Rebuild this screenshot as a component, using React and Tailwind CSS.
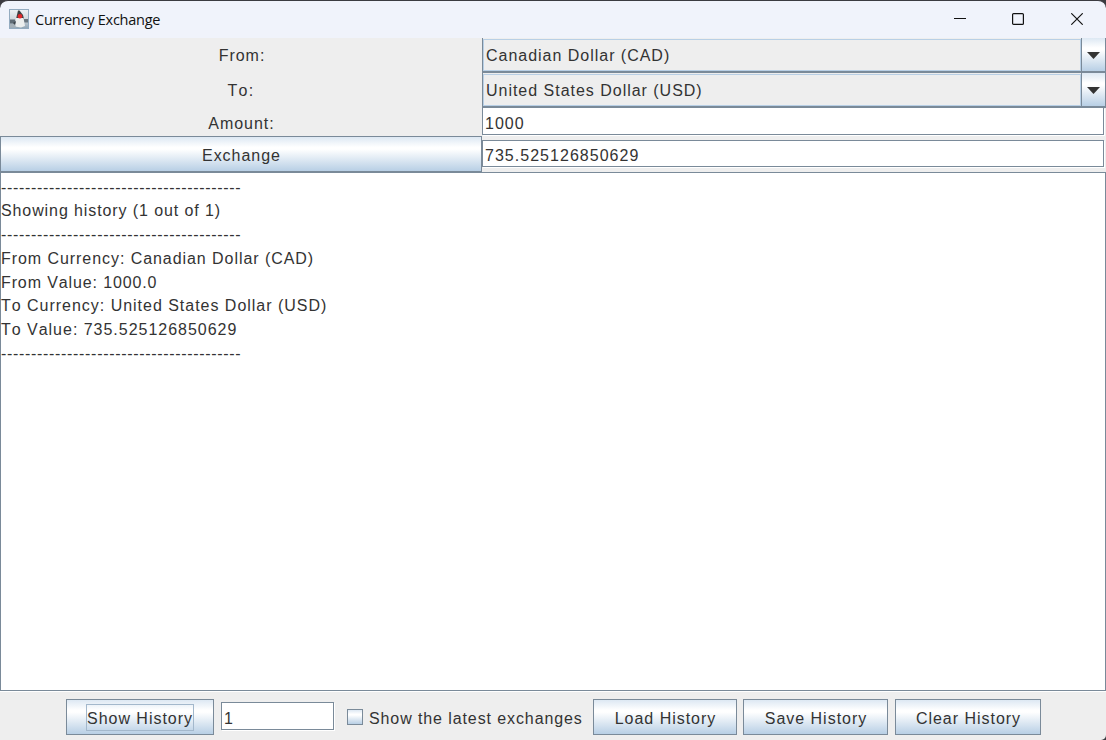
import React from "react";

const metal =
  "border border-[#7a8a99] bg-[linear-gradient(#dde8f3_0%,#ffffff_30%,#ffffff_36%,#b8cfe5_100%)]";

function DukeIcon() {
  return (
    <svg width="20" height="20" viewBox="0 0 20 20" className="-mt-px ml-[9px] shrink-0">
      <defs>
        <linearGradient id="sky" x1="0" y1="0" x2="0" y2="1">
          <stop offset="0" stopColor="#eef2f5" />
          <stop offset="0.55" stopColor="#cdd5db" />
          <stop offset="1" stopColor="#8fa3b4" />
        </linearGradient>
      </defs>
      <rect x="0.5" y="0.5" width="19" height="19" fill="url(#sky)" stroke="#93abc0" />
      <path d="M1 10.5h5l1 4H1z" fill="#5f6b75" />
      <path d="M14 10h5v3.500h-4z" fill="#6a7680" />
      <path d="M9 1.500h1.500L14 6l1 4H7z" fill="#3f4143" />
      <path d="M7 9h7.500l1.500 8-4 1.500-6-1z" fill="#eceeee" />
      <path d="M1 15l5 0 1 3.500H1z" fill="#a5b0b8" />
      <path d="M4 14l3-2-1 4z" fill="#3c444b" />
      <circle cx="11" cy="7.2" r="2.3" fill="#e2262a" />
    </svg>
  );
}

function TitleBar() {
  return (
    <header className="flex h-[38px] shrink-0 items-center rounded-t-[8px] border-t border-[#3b3b40] bg-[#f0f3fb]">
      <DukeIcon />
      <h1 className="ml-[6px] w-[200px] font-['Open_Sans',sans-serif] text-[14.5px] leading-5 tracking-[-0.24px] text-[#111]">
        Currency Exchange
      </h1>
      <div className="-mt-[2px] ml-auto flex items-center">
        <svg width="12" height="12" className="mr-[46px]">
          <path d="M0 5.5h12" stroke="#111" />
        </svg>
        <svg width="12" height="12" className="mr-[47px]">
          <rect x="0.6" y="0.6" width="10.8" height="10.8" rx="1" fill="none" stroke="#111" strokeWidth="1.2" />
        </svg>
        <svg width="12" height="12" className="mr-[23px]">
          <path d="M0.3 0.3l11.4 11.4M11.7 0.3L0.3 11.7" stroke="#111" strokeWidth="1.15" />
        </svg>
      </div>
    </header>
  );
}

function Combo({ children }) {
  return (
    <div className="flex h-[35px] border-l border-b border-[#7a8a99]">
      <div className="flex h-[34px] grow flex-col border-b border-[#7a8a99]">
        <div className="mt-px flex grow items-center border border-[#b8cfe5] pt-[2px] pl-[2px]">
          <span>{children}</span>
        </div>
      </div>
      <div className={`flex w-[25px] items-center justify-center border-t-0 ${metal}`}>
        <svg width="13" height="7" className="mt-[2px]">
          <path d="M0 0h13L6.5 7z" fill="#333" />
        </svg>
      </div>
    </div>
  );
}

function Field({ children, className }) {
  return (
    <div className={`flex items-center border border-[#7a8a99] bg-white pl-[2px] shadow-[1px_1px_0_#fff] ${className}`}>
      {children}
    </div>
  );
}

function Button({ children, className }) {
  return (
    <button className={`flex h-9 shrink-0 items-center justify-center pt-[4px] pl-px ${metal} ${className}`}>
      {children}
    </button>
  );
}

const rule = "-".repeat(40);

export default function App() {
  return (
    <div className="flex h-[740px] w-[1106px] flex-col overflow-hidden bg-[#3b3b40] font-['Liberation_Sans',Arial,sans-serif] text-[16px] leading-[20px] tracking-[0.98px] whitespace-pre text-[#333] [font-kerning:none]">
      <TitleBar />
      <main className="flex min-h-0 grow flex-col rounded-br-[5px] bg-[#eeeeee]">
        <section className="flex h-[134px] shrink-0">
          <div className="flex w-[482px] flex-col text-center">
            <label className="h-[35px] pt-[8px] pl-[2px]">From:</label>
            <label className="h-[35px] pt-[8px] tracking-[1.3px]">To:</label>
            <label className="h-[28px] pt-[6px] pl-[1px]">Amount:</label>
            <Button>Exchange</Button>
          </div>
          <div className="flex w-[624px] flex-col">
            <Combo>Canadian Dollar (CAD)</Combo>
            <Combo>United States Dollar (USD)</Combo>
            <Field className="mr-[2px] h-[27px] border-t-0 pt-[5px]">1000</Field>
            <Field className="mt-[5px] mr-[2px] h-[27px] pt-[5px] tracking-[1.03px]">735.525126850629</Field>
          </div>
        </section>
        <section className="h-[519px] shrink-0 border border-[#7a8a99] bg-white shadow-[0_1px_0_#fff]">
          <div className="pt-[2.6px] leading-[23.75px]">
            <p className="tracking-[0.68px]">{rule}</p>
            <p className="tracking-[0.9px]">Showing history (1 out of 1)</p>
            <p className="tracking-[0.68px]">{rule}</p>
            <p className="tracking-[0.94px]">From Currency: Canadian Dollar (CAD)</p>
            <p className="tracking-[0.88px]">From Value: 1000.0</p>
            <p className="tracking-[0.98px]">To Currency: United States Dollar (USD)</p>
            <p className="tracking-[0.98px]">To Value: 735.525126850629</p>
            <p className="tracking-[0.68px]">{rule}</p>
          </div>
        </section>
        <footer className="flex items-start pt-2 pl-[66px]">
          <Button className="w-[148px]">
            <span className="-mt-[4px] -ml-px flex h-[27px] w-[108px] items-center justify-center border border-[#a3b8cc] pt-[4px]">
              Show History
            </span>
          </Button>
          <Field className="mt-[3px] ml-[7px] h-[28px] w-[113px] pt-[5px]">1</Field>
          <label className="mt-[9px] ml-[13px] flex w-[246px] items-center">
            <span className={`mr-[6px] -mt-[3px] h-4 w-4 shrink-0 ${metal}`} />
            <span className="pt-px tracking-[0.9px]">Show the latest exchanges</span>
          </label>
          <Button className="w-[144px]">Load History</Button>
          <Button className="ml-[6px] w-[145px]">Save History</Button>
          <Button className="ml-[7px] w-[146px]">Clear History</Button>
        </footer>
      </main>
    </div>
  );
}
